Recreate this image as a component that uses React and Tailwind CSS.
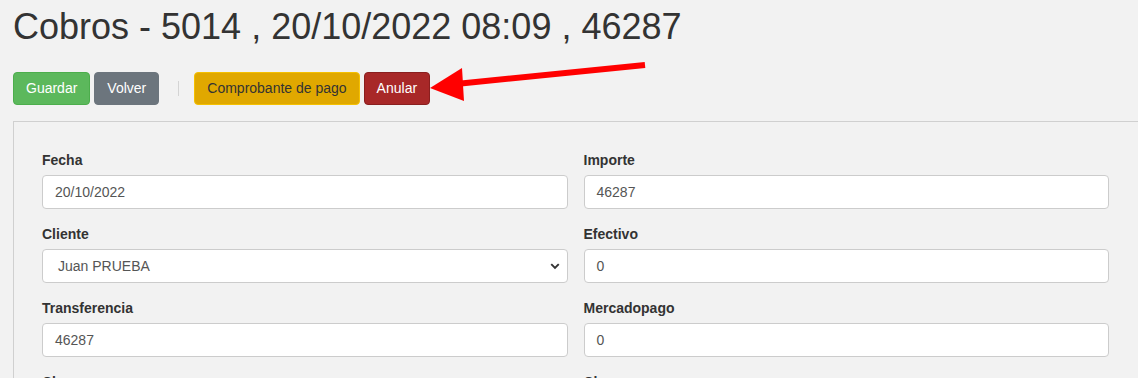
import React from 'react';

const Field = ({ label, value, select }) => (
  <div className="mb-[15px]">
    <label className="block mb-[5px] text-[14px] leading-[20px] font-bold text-[#333]">{label}</label>
    {select ? (
      <div className="flex items-center justify-between h-[34px] pl-[15px] pr-[6px] bg-white border border-[#ccc] rounded-[4px] text-[14px] text-[#555]">
        <span>{value}</span>
        <svg width="12" height="12" viewBox="0 0 16 16" className="text-[#333]">
          <path d="M3 5.5 L8 10.5 L13 5.5" fill="none" stroke="currentColor" strokeWidth="2.6" />
        </svg>
      </div>
    ) : (
      <div className="flex items-center h-[34px] px-3 bg-white border border-[#ccc] rounded-[4px] text-[14px] text-[#555]">
        {value}
      </div>
    )}
  </div>
);

export default function App() {
  return (
    <div className="relative h-[378px] overflow-hidden bg-[#f2f2f2] font-['Liberation_Sans',Arial,sans-serif]">
      <div className="pl-[13px]">
        <h1 className="pt-[7px] text-[36px] leading-[40px] text-[#333]">Cobros - 5014 , 20/10/2022 08:09 , 46287</h1>
        <div className="flex items-center mt-[25px]">
          <button className="h-[33px] px-3 text-[14px] text-white bg-[#5cb85c] border border-[#4cae4c] rounded-[4px]">Guardar</button>
          <button className="ml-[4px] h-[33px] px-3 text-[14px] text-white bg-[#6c757d] border border-[#6c757d] rounded-[4px]">Volver</button>
          <span className="ml-[19px] w-px h-[15px] bg-[#d4d4d4]" />
          <button className="ml-[15px] h-[33px] px-3 text-[14px] text-[#333] bg-[#e0a800] border border-[#f5c000] rounded-[4px]">Comprobante de pago</button>
          <button className="ml-[4px] h-[33px] px-3 text-[14px] text-white bg-[#a82828] border border-[#8a1f1f] rounded-[4px]">Anular</button>
        </div>
        <div className="mt-[16px] border-t border-l border-[#d0d0d0] pt-[28px] pl-[28px] pr-[29px]">
          <div className="grid grid-cols-2 gap-x-4">
            <Field label="Fecha" value="20/10/2022" />
            <Field label="Importe" value="46287" />
            <Field label="Cliente" value="Juan PRUEBA" select />
            <Field label="Efectivo" value="0" />
            <Field label="Transferencia" value="46287" />
            <Field label="Mercadopago" value="0" />
            <Field label="Cheque" value="0" />
            <Field label="Cheques" value="0" />
          </div>
        </div>
      </div>
      <svg className="absolute left-0 top-0 pointer-events-none" width="1138" height="378">
        <line x1="456" y1="84" x2="645" y2="65" stroke="#ff0000" strokeWidth="6" />
        <polygon points="430,88 462,68 464,101" fill="#ff0000" />
      </svg>
    </div>
  );
}
